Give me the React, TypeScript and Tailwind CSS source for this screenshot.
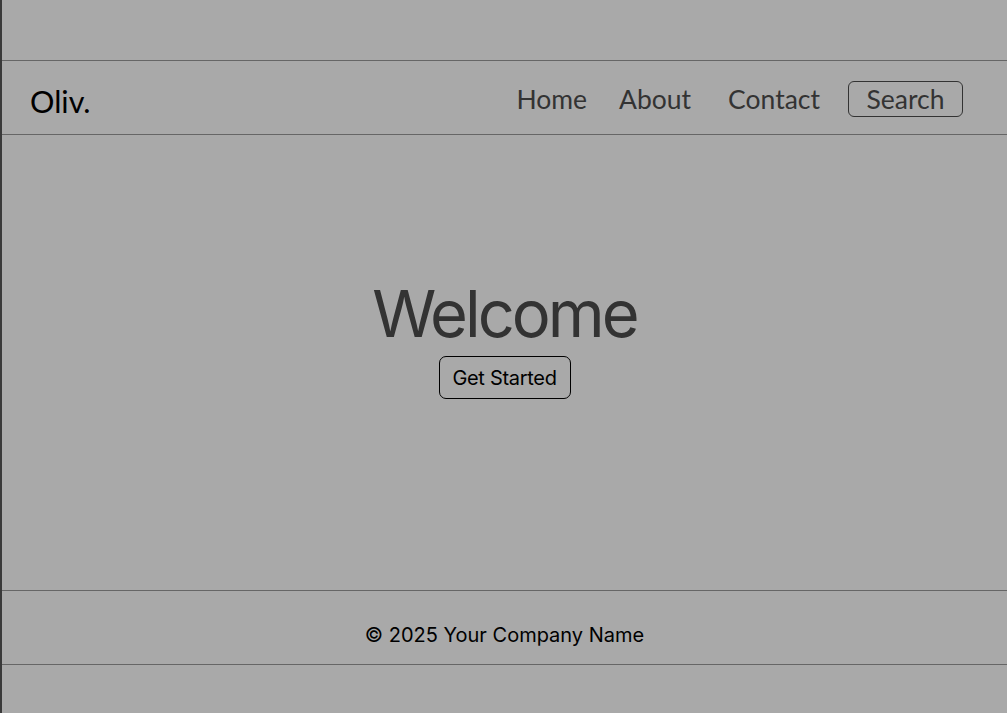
export default function App() {
    return (
        <div className="min-h-[713px] bg-[#a9a9a9] border-l-2 border-[#3a3a3a] pt-[60px] pb-[48px] flex flex-col">
            {/* header */}
            <header className="h-[75px] border-y border-[#666] flex items-center justify-between pl-[28px] pr-[44px]">
                <div className="text-[30.5px] text-black font-['Lato',sans-serif] leading-none mt-[8px]">Oliv.</div>
                <nav className="flex items-center font-['Lato',sans-serif] text-[26.5px] text-[#333] leading-none mt-[3px]">
                    <a className="mr-[32px]">Home</a>
                    <a className="mr-[37px]">About</a>
                    <a className="mr-[28px]">Contact</a>
                    <button className="border border-[#333] rounded-[6px] h-[36px] w-[115px] flex items-center justify-center leading-none">Search</button>
                </nav>
            </header>

            {/* main */}
            <main className="flex-1 flex flex-col items-center pt-[146px]">
                <h1 className="font-['Inter',sans-serif] text-[65px] text-[#333] leading-none tracking-[-3px]">Welcome</h1>
                <button className="mt-[10px] border-[1.5px] border-black rounded-[7px] h-[43px] w-[132px] text-[20px] text-black font-['Inter',sans-serif] tracking-[-0.3px]">Get Started</button>
            </main>

            {/* footer */}
            <footer className="h-[75px] border-y border-[#666] flex justify-center pt-[34px]">
                <p className="font-['Inter',sans-serif] text-[20px] leading-none text-black">© 2025 Your Company Name</p>
            </footer>
        </div>
    )
}
